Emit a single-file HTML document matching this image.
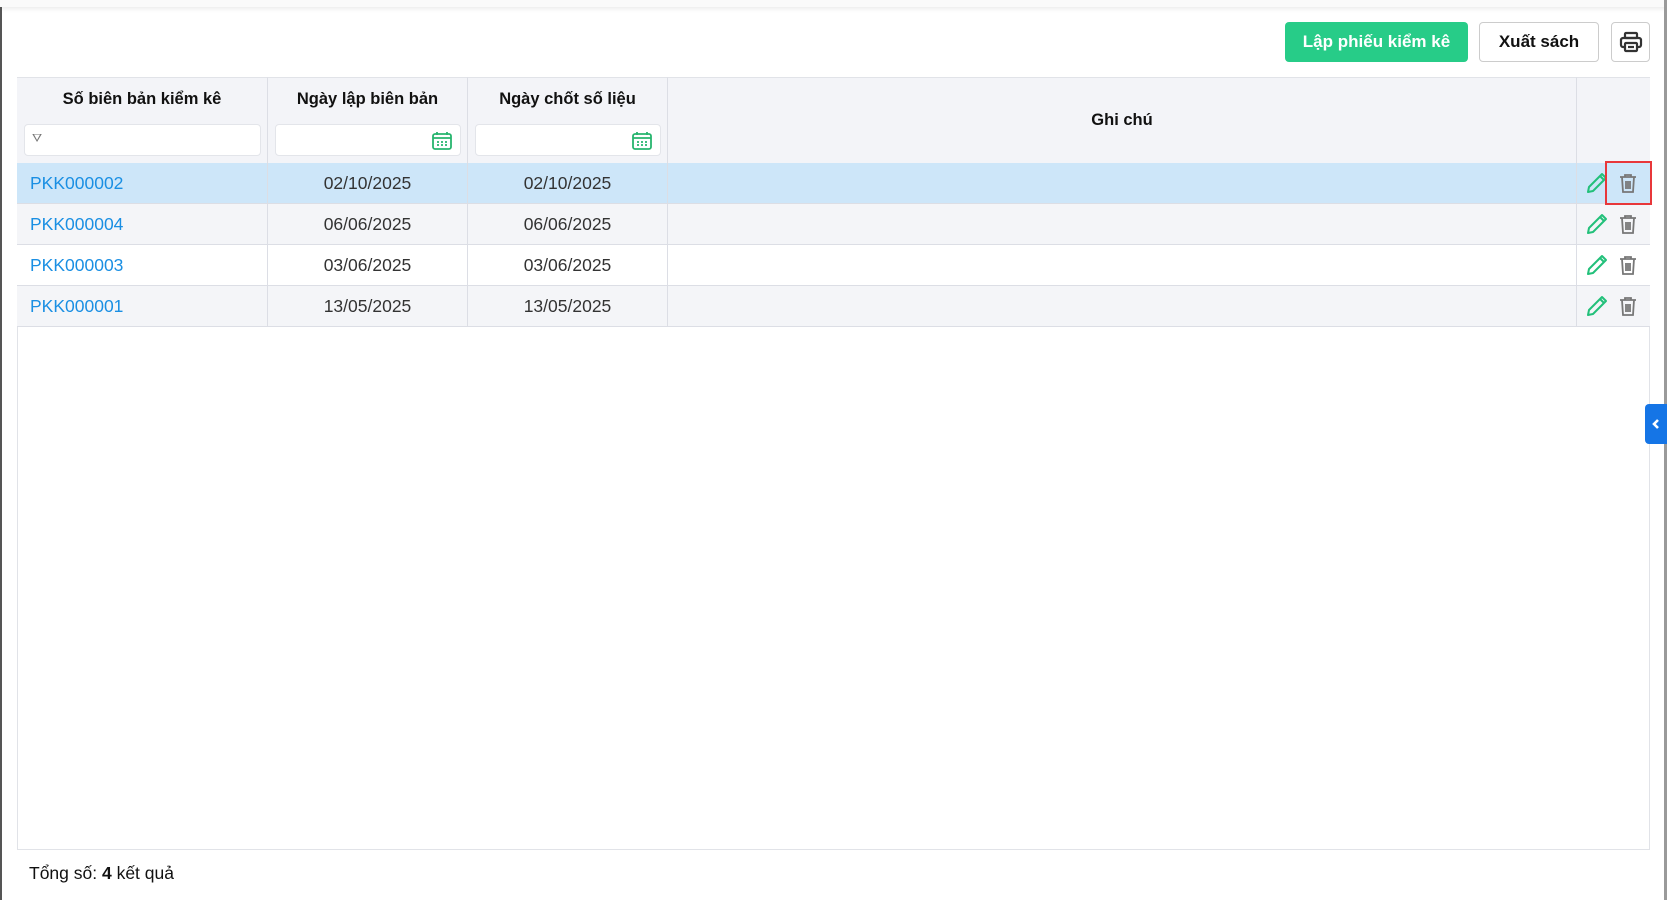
<!DOCTYPE html>
<html><head><meta charset="utf-8"><style>
*{box-sizing:border-box;margin:0;padding:0}
body{width:1667px;height:900px;overflow:hidden;background:#fff;font-family:"Liberation Sans",Arial,sans-serif;position:relative;color:#222}
.topbar{position:absolute;left:0;top:0;width:1667px;height:7px;background:#fafafa;box-shadow:0 2px 4px rgba(0,0,0,.08)}
.lb{position:absolute;left:0;top:7px;width:2px;height:893px;background:#555}
.rb{position:absolute;right:0;top:0;width:3px;height:900px;background:#9a9a9a}
.btn{position:absolute;top:22px;height:40px;border-radius:4px;font-size:17px;font-weight:bold;display:flex;align-items:center;justify-content:center}
.g{left:1285px;width:183px;background:#27cc88;color:#fff}
.x{left:1479px;width:120px;border:1px solid #ccc;background:#fff;color:#111}
.p{left:1611px;width:39px;border:1px solid #ccc;background:#fff}
.tbl{position:absolute;left:17px;top:77px;width:1633px;height:773px;border:1px solid #e1e3e8}
.c{position:absolute;border-right:1px solid #dcdee5;border-bottom:1px solid #dcdee5;font-size:17.5px;display:flex;align-items:center}
.h{background:#f3f4f8;font-weight:bold;color:#111;font-size:16.5px;border-top:1px solid #e1e3e8}
.inp{position:absolute;top:46px;height:32px;background:#fff;border:1px solid #e3e5ea;border-radius:4px}
.lnk{color:#1a8fe3;padding-left:13px}
.dt{justify-content:center;color:#333}
.foot{position:absolute;left:29px;top:863px;font-size:17.5px;color:#111}
.tab{position:absolute;left:1645px;top:404px;width:22px;height:40px;background:#1575e6;border-radius:4px 0 0 4px;display:flex;align-items:center;justify-content:center}
.red{position:absolute;left:1605px;top:161px;width:47px;height:44px;border:2px solid #e8373a}
</style></head><body>
<div class="topbar"></div><div class="lb"></div><div class="rb"></div>
<div class="btn g">Lập phiếu kiểm kê</div>
<div class="btn x">Xuất sách</div>
<div class="btn p"><svg width="24" height="22" viewBox="0 0 24 22" fill="none" stroke="#333" stroke-width="2.2"><rect x="6" y="2" width="12" height="5" rx="1"/><rect x="2" y="7" width="20" height="9" rx="2"/><rect x="6" y="12" width="12" height="8" rx="1" fill="#fff"/><line x1="9" y1="16" x2="15" y2="16"/></svg></div>
<div class="tbl"></div>
<div class="c h" style="left:17px;top:77px;width:251px;height:87px;align-items:flex-start;justify-content:center;padding-top:12px">Số biên bản kiểm kê
<div class="inp" style="left:7px;width:237px"><span style="position:absolute;left:7px;top:6px;font-size:12px;color:#777;font-weight:normal">⛛</span></div></div>
<div class="c h" style="left:268px;top:77px;width:200px;height:87px;align-items:flex-start;justify-content:center;padding-top:12px">Ngày lập biên bản
<div class="inp" style="left:7px;width:186px"><svg style="position:absolute;right:8px;top:6px" width="20" height="19" viewBox="0 0 20 19" fill="none" stroke="#27b56e" stroke-width="1.8"><rect x="1" y="3" width="18" height="15" rx="2"/><line x1="1" y1="7" x2="19" y2="7"/><line x1="5" y1="1" x2="5" y2="4"/><line x1="15" y1="1" x2="15" y2="4"/><path d="M5 11h2M9 11h2M13 11h2M5 14h2M9 14h2M13 14h2"/></svg></div></div>
<div class="c h" style="left:468px;top:77px;width:200px;height:87px;align-items:flex-start;justify-content:center;padding-top:12px">Ngày chốt số liệu
<div class="inp" style="left:7px;width:186px"><svg style="position:absolute;right:8px;top:6px" width="20" height="19" viewBox="0 0 20 19" fill="none" stroke="#27b56e" stroke-width="1.8"><rect x="1" y="3" width="18" height="15" rx="2"/><line x1="1" y1="7" x2="19" y2="7"/><line x1="5" y1="1" x2="5" y2="4"/><line x1="15" y1="1" x2="15" y2="4"/><path d="M5 11h2M9 11h2M13 11h2M5 14h2M9 14h2M13 14h2"/></svg></div></div>
<div class="c h" style="left:668px;top:77px;width:909px;height:87px;justify-content:center">Ghi chú</div>
<div class="c h" style="left:1577px;top:77px;width:73px;height:87px;border-right:none"></div>

<div id="rows"></div>
<script>
var d=[["PKK000002","02/10/2025","#cde6f9"],["PKK000004","06/06/2025","#f4f5f8"],["PKK000003","03/06/2025","#fff"],["PKK000001","13/05/2025","#f4f5f8"]];
var h="";
var pen='<svg width="24" height="24" viewBox="0 0 24 24" fill="none" stroke="#22c07a" stroke-width="2" stroke-linejoin="round"><path d="M17 3l4 4L8 20l-5 1 1-5z"/><path d="M15 5l4 4"/></svg>';
var tr='<svg width="22" height="22" viewBox="0 0 22 22" fill="none" stroke="#777" stroke-width="1.8"><path d="M3 5h16M8 5V3h6v2"/><path d="M5 5l1 15h10l1-15"/><path d="M9 9v8M11 9v8M13 9v8"/></svg>';
d.forEach(function(r,i){var t=163+i*41,b=r[2];
h+='<div class="c lnk" style="left:17px;top:'+t+'px;width:251px;height:41px;background:'+b+'">'+r[0]+'</div>';
h+='<div class="c dt" style="left:268px;top:'+t+'px;width:200px;height:41px;background:'+b+'">'+r[1]+'</div>';
h+='<div class="c dt" style="left:468px;top:'+t+'px;width:200px;height:41px;background:'+b+'">'+r[1]+'</div>';
h+='<div class="c" style="left:668px;top:'+t+'px;width:909px;height:41px;background:'+b+'"></div>';
h+='<div class="c" style="left:1577px;top:'+t+'px;width:73px;height:41px;background:'+b+';border-right:none;padding-left:8px;gap:8px">'+pen+tr+'</div>';});
document.getElementById("rows").innerHTML=h;
</script>
<div class="red"></div>
<div class="tab"><svg width="8" height="12" viewBox="0 0 8 12" fill="none" stroke="#fff" stroke-width="2.6"><path d="M6 2L2 6l4 4"/></svg></div>
<div class="foot">Tổng số: <b>4</b> kết quả</div>
</body></html>
